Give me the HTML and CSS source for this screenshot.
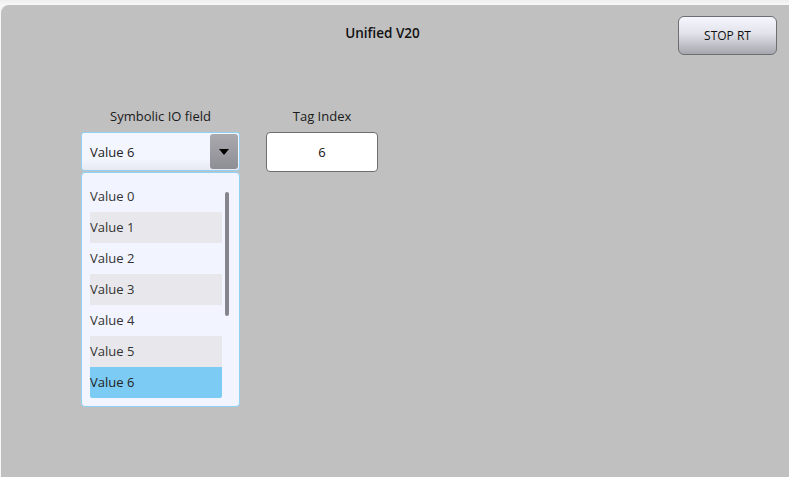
FILE: index.html
```html
<!DOCTYPE html>
<html>
<head>
<meta charset="utf-8">
<link rel="stylesheet" href="styles.css">
</head>
<body>
<div class="topstrip"></div>
<div class="panel">
  <div class="header">
    <div class="title">Unified V20</div>
    <button class="stop">STOP RT</button>
  </div>
  <div class="fields">
    <div class="group combo-group">
      <div class="label">Symbolic IO field</div>
      <div class="combo">
        <span class="combo-value">Value 6</span>
        <span class="combo-btn"><span class="tri"></span></span>
      </div>
      <div class="list">
        <div class="items">
          <div class="item">Value 0</div>
          <div class="item alt">Value 1</div>
          <div class="item">Value 2</div>
          <div class="item alt">Value 3</div>
          <div class="item">Value 4</div>
          <div class="item alt">Value 5</div>
          <div class="item sel">Value 6</div>
        </div>
        <div class="scroll"></div>
      </div>
    </div>
    <div class="group tag-group">
      <div class="label">Tag Index</div>
      <div class="tagbox">6</div>
    </div>
  </div>
</div>
</body>
</html>
```

FILE: styles.css
```css
html, body {
  margin: 0;
  padding: 0;
  background: #f6f6f6;
  font-family: "Open Sans", "Noto Sans", sans-serif;
  color: #1a1a1a;
}
.topstrip {
  height: 5px;
  background: linear-gradient(#eeeeee, #f8f8f8);
}
.panel {
  margin-left: 1px;
  height: 472px;
  background: #c0c0c0;
  border-top-left-radius: 8px;
  overflow: hidden;
}
.header {
  display: flex;
  align-items: flex-start;
  padding: 11px 12px 0 0;
}
.title {
  flex: 1;
  text-align: center;
  padding-left: 86px;
  margin-top: 8px;
  font-size: 13.5px;
  line-height: 18px;
  font-weight: 600;
  color: #111;
}
.stop {
  width: 99px;
  height: 39px;
  border: 1px solid #6e6e72;
  border-radius: 6px;
  background: linear-gradient(#f6f6fe, #e2e2ea 45%, #a6a6ae);
  font-family: inherit;
  font-size: 12px;
  color: #111;
  padding: 0;
}
.fields {
  display: flex;
  gap: 26px;
  margin: 52px 0 0 80px;
}
.group {
  display: flex;
  flex-direction: column;
}
.combo-group { width: 159px; }
.tag-group { width: 112px; }
.label {
  text-align: center;
  font-size: 13px;
  line-height: 18px;
  margin-bottom: 7px;
  color: #1a1a1a;
}
.combo {
  height: 39px;
  box-sizing: border-box;
  border: 1px solid #8fd2f3;
  border-radius: 3px;
  background: linear-gradient(#f3f5ff 70%, #e6e8f2);
  display: flex;
  align-items: center;
  padding: 1px;
}
.combo-value {
  flex: 1;
  padding-left: 7px;
  font-size: 13px;
  color: #222;
}
.combo-btn {
  width: 28px;
  height: 100%;
  border-radius: 3px;
  background: linear-gradient(#a9a9ae, #8e8e95);
  display: flex;
  align-items: center;
  justify-content: center;
}
.tri {
  width: 0;
  height: 0;
  border-left: 5.5px solid transparent;
  border-right: 5.5px solid transparent;
  border-top: 6px solid #000;
}
.list {
  margin-top: 1px;
  height: 235px;
  box-sizing: border-box;
  border: 1px solid #8fd2f3;
  border-radius: 4px;
  background: #f2f4ff;
  display: flex;
  gap: 3px;
  padding: 8px 0 0 8px;
}
.items {
  width: 132px;
  display: flex;
  flex-direction: column;
}
.item {
  height: 31px;
  line-height: 31px;
  font-size: 13px;
  color: #333;
}
.item.alt { background: #e8e8ec; }
.item.sel { background: #7ccbf5; border-radius: 0 0 2px 2px; color: #222; }
.scroll {
  width: 4px;
  height: 124px;
  margin-top: 11px;
  border-radius: 2px;
  background: #85858d;
}
.tagbox {
  height: 40px;
  box-sizing: border-box;
  border: 1px solid #6e6e72;
  border-radius: 4px;
  background: #fff;
  display: flex;
  align-items: center;
  justify-content: center;
  font-size: 13px;
  color: #111;
}
```
